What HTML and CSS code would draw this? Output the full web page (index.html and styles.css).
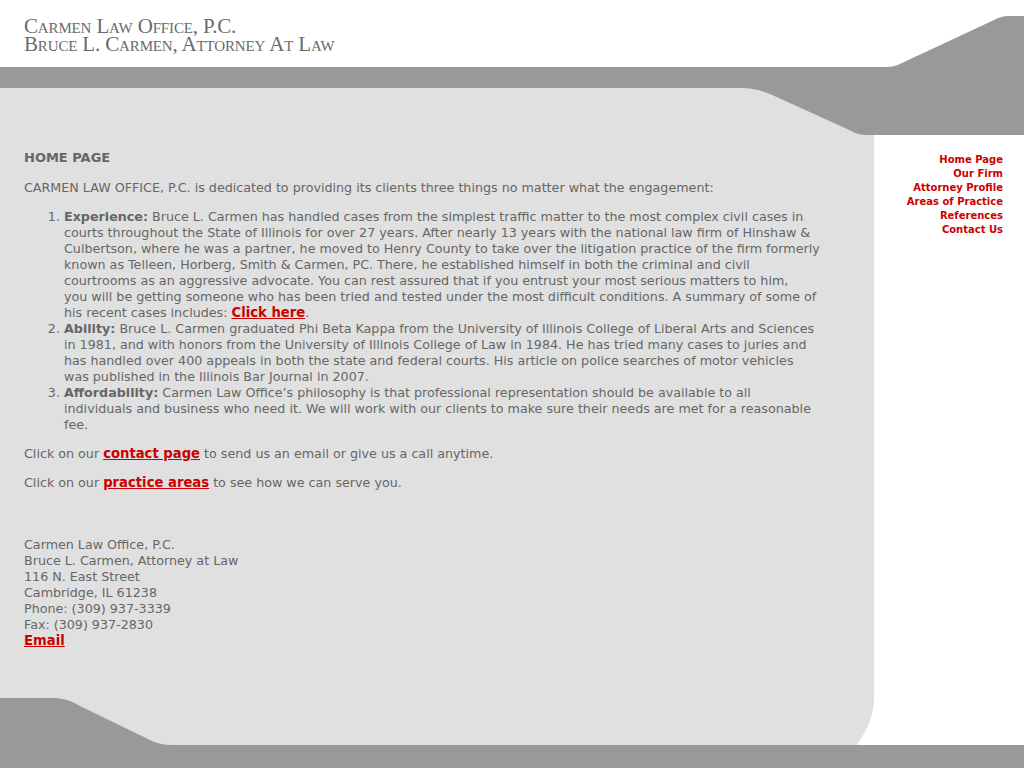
FILE: index.html
```html
<!DOCTYPE html>
<html lang="en">
<head>
<meta charset="utf-8">
<title>Carmen Law Office, P.C.</title>
<link rel="stylesheet" href="styles.css">
</head>
<body>
<div class="page">
  <header class="masthead">
    <div class="title">Carmen Law Office, P.C.</div>
    <div class="title">Bruce L. Carmen, Attorney At Law</div>
  </header>
  <div class="layout">
    <main class="content">
      <h1 class="heading">HOME PAGE</h1>
      <p>CARMEN LAW OFFICE, P.C. is dedicated to providing its clients three things no matter what the engagement:</p>
      <ol class="points">
        <li><strong>Experience:</strong> Bruce L. Carmen has handled cases from the simplest traffic matter to the most complex civil cases in<br>courts throughout the State of Illinois for over 27 years. After nearly 13 years with the national law firm of Hinshaw &amp;<br>Culbertson, where he was a partner, he moved to Henry County to take over the litigation practice of the firm formerly<br>known as Telleen, Horberg, Smith &amp; Carmen, PC. There, he established himself in both the criminal and civil<br>courtrooms as an aggressive advocate. You can rest assured that if you entrust your most serious matters to him,<br>you will be getting someone who has been tried and tested under the most difficult conditions. A summary of some of<br>his recent cases includes: <a class="link" href="#">Click here</a>.</li>
        <li><strong>Ability:</strong> Bruce L. Carmen graduated Phi Beta Kappa from the University of Illinois College of Liberal Arts and Sciences<br>in 1981, and with honors from the University of Illinois College of Law in 1984. He has tried many cases to juries and<br>has handled over 400 appeals in both the state and federal courts. His article on police searches of motor vehicles<br>was published in the Illinois Bar Journal in 2007.</li>
        <li><strong>Affordability:</strong> Carmen Law Office’s philosophy is that professional representation should be available to all<br>individuals and business who need it. We will work with our clients to make sure their needs are met for a reasonable<br>fee.</li>
      </ol>
      <p>Click on our <a class="link" href="#">contact page</a> to send us an email or give us a call anytime.</p>
      <p>Click on our <a class="link" href="#">practice areas</a> to see how we can serve you.</p>
      <p class="address">Carmen Law Office, P.C.<br>Bruce L. Carmen, Attorney at Law<br>116 N. East Street<br>Cambridge, IL 61238<br>Phone: (309) 937-3339<br>Fax: (309) 937-2830<br><a class="link" href="#">Email</a></p>
    </main>
    <nav class="nav">
      <a href="#">Home Page</a>
      <a href="#">Our Firm</a>
      <a href="#">Attorney Profile</a>
      <a href="#">Areas of Practice</a>
      <a href="#">References</a>
      <a href="#">Contact Us</a>
    </nav>
  </div>
</div>
</body>
</html>
```
FILE: styles.css
```css
html, body {
  margin: 0;
  padding: 0;
  background: #ffffff;
}

.page {
  width: 1024px;
  height: 768px;
  overflow: hidden;
  background-color: #ffffff;
  background-repeat: no-repeat;
  background-image: url("data:image/svg+xml,%3Csvg xmlns='http://www.w3.org/2000/svg' width='1024' height='768' viewBox='0 0 1024 768'%3E%3Cpath fill='%23999999' d='M0,67 H885 C892,67 896,66 902,63 L994,20 C999,17.5 1003,16 1010,16 H1024 V135 H0 Z'/%3E%3Crect fill='%23999999' x='0' y='690' width='300' height='78'/%3E%3Crect fill='%23999999' x='0' y='745' width='1024' height='23'/%3E%3Cpath fill='%23e0e0e0' d='M0,88 H740 C752,88 760,90 770,94 L845,128 C853,132 858,135 866,135 H874 V697 C874,712 870,726 857,745 H175 C162,745 156,743 148,739 L80,706 C70,700 62,698 52,698 H0 Z'/%3E%3C/svg%3E");
  font-family: "DejaVu Sans", Verdana, sans-serif;
  color: #666666;
}

.masthead {
  height: 67px;
  box-sizing: border-box;
  padding: 17px 0 0 24px;
}

.title {
  font-family: "Liberation Serif", "Times New Roman", serif;
  font-variant: small-caps;
  font-size: 21px;
  letter-spacing: -0.15px;
  line-height: 18px;
  color: #6a6a6a;
}

.layout {
  display: flex;
  align-items: flex-start;
}

.content {
  width: 874px;
  box-sizing: border-box;
  padding: 83px 36px 0 24px;
  font-size: 12.7px;
  line-height: 16px;
}

.heading {
  margin: 0 0 14px;
  font-size: 13px;
  line-height: 16px;
  font-weight: bold;
}

.content p {
  margin: 0 0 13px;
}

.points {
  margin: 0 0 13px;
  padding-left: 40px;
}

.link {
  color: #cc0000;
  font-weight: bold;
  font-size: 13.2px;
  text-decoration: underline;
}

.content .address {
  margin-top: 46px;
}

.nav {
  flex: 1;
  display: flex;
  flex-direction: column;
  align-items: flex-end;
  padding: 86px 21px 0 0;
  font-size: 10px;
  line-height: 14px;
  font-weight: bold;
}

.nav a {
  color: #cc0000;
  text-decoration: none;
}
```
